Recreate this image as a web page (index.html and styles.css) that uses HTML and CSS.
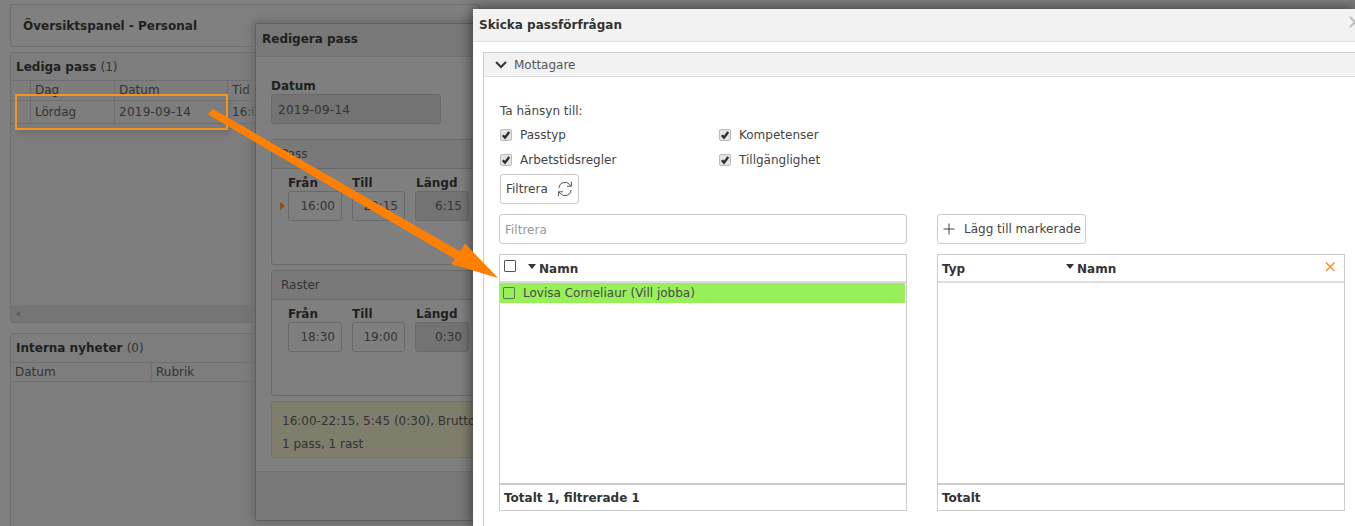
FILE: index.html
```html
<!DOCTYPE html>
<html lang="sv">
<head>
<meta charset="utf-8">
<title>Skicka passförfrågan</title>
<link rel="stylesheet" href="styles.css">
</head>
<body>
<main class="page">
  <header class="page-title">Översiktspanel - Personal</header>
  <section class="panel panel-free">
    <h2 class="panel-title">Lediga pass <span class="count">(1)</span></h2>
    <div class="grid-head"><span class="c0"></span><span class="c1">Dag</span><span class="c2">Datum</span><span class="c3">Tid</span></div>
    <div class="grid-row"><span class="c0"></span><span class="c1">Lördag</span><span class="c2 digits">2019-09-14</span><span class="c3">16:00</span></div>
    <div class="grid-fill"></div>
    <div class="hscroll"><span class="hscroll-arrow"></span></div>
  </section>
  <section class="panel panel-news">
    <h2 class="panel-title">Interna nyheter <span class="count">(0)</span></h2>
    <div class="grid-head news-head"><span class="n1">Datum</span><span class="n2">Rubrik</span></div>
  </section>
</main>

<section class="modal-edit">
  <h2 class="edit-title">Redigera pass</h2>
  <div class="edit-body">
    <label class="edit-label">Datum</label>
    <div class="edit-input date-input digits">2019-09-14</div>
    <div class="edit-box box-pass">
      <div class="edit-box-head">Pass</div>
      <div class="time-labels"><b>Från</b><b>Till</b><b>Längd</b></div>
      <div class="time-row">
        <span class="marker"></span>
        <span class="time t1">16:00</span><span class="time t2">22:15</span><span class="time t3 ro">6:15</span>
      </div>
    </div>
    <div class="edit-box box-rast">
      <div class="edit-box-head">Raster</div>
      <div class="time-labels"><b>Från</b><b>Till</b><b>Längd</b></div>
      <div class="time-row">
        <span class="marker hidden"></span>
        <span class="time t1">18:30</span><span class="time t2">19:00</span><span class="time t3 ro">0:30</span>
      </div>
    </div>
    <div class="summary">
      <div>16:00-22:15, 5:45 (0:30), Brutto</div>
      <div>1 pass, 1 rast</div>
    </div>
  </div>
  <div class="edit-foot"></div>
</section>

<section class="modal-send">
  <header class="send-head">
    <h1 class="send-title">Skicka passförfrågan</h1>
    <svg class="close" viewBox="0 0 12 12" width="12" height="12"><path d="M1 1l10 10M11 1L1 11"/></svg>
  </header>
  <div class="send-body">
    <div class="accordion">
      <div class="acc-head">
        <svg class="chev" viewBox="0 0 12 8" width="12" height="8"><path d="M1 1l5 5 5-5"/></svg>
        <span>Mottagare</span>
      </div>
      <div class="acc-body">
        <div class="consider">Ta hänsyn till:</div>
        <div class="checks">
          <label class="check"><span class="cb on"><svg viewBox="0 0 12 12" width="12" height="12"><path d="M2.800 6.200l2.200 2.400L9.200 3"/></svg></span>Passtyp</label>
          <label class="check"><span class="cb on"><svg viewBox="0 0 12 12" width="12" height="12"><path d="M2.800 6.200l2.200 2.400L9.200 3"/></svg></span>Kompetenser</label>
          <label class="check"><span class="cb on"><svg viewBox="0 0 12 12" width="12" height="12"><path d="M2.800 6.200l2.200 2.400L9.200 3"/></svg></span>Arbetstidsregler</label>
          <label class="check"><span class="cb on"><svg viewBox="0 0 12 12" width="12" height="12"><path d="M2.800 6.200l2.200 2.400L9.200 3"/></svg></span>Tillgänglighet</label>
        </div>
        <button class="btn btn-filter">Filtrera
          <svg class="refresh" viewBox="0 0 16 16" width="16" height="16"><path d="M1.800 7A6.200 6.200 0 0 1 12.600 3.400L14.200 5.200M14.400 .8v4.400h-4.400M14.200 9A6.200 6.200 0 0 1 3.400 12.600L1.800 10.800M1.600 15.200v-4.400h4.400"/></svg>
        </button>
        <div class="columns">
          <div class="column">
            <div class="search">Filtrera</div>
            <div class="list">
              <div class="list-head">
                <span class="box head-box"></span>
                <span class="sort"></span><b class="head-label">Namn</b>
              </div>
              <div class="list-body">
                <div class="list-row"><span class="box row-box"></span>Lovisa Corneliaur (Vill jobba)</div>
              </div>
              <div class="list-foot">Totalt 1, filtrerade 1</div>
            </div>
          </div>
          <div class="column">
            <div class="toolbar">
              <button class="btn btn-add">
                <svg class="plus" viewBox="0 0 12 12" width="12" height="12"><path d="M6 .5v11M.5 6h11"/></svg>
                Lägg till markerade
              </button>
            </div>
            <div class="list">
              <div class="list-head">
                <b class="typ head-label">Typ</b>
                <span class="sort"></span><b class="head-label">Namn</b>
                <svg class="clear" viewBox="0 0 10 10" width="10" height="10"><path d="M1 .5l8.500 8.500M9.500 .5L1 9"/></svg>
              </div>
              <div class="list-body"></div>
              <div class="list-foot">Totalt</div>
            </div>
          </div>
        </div>
      </div>
    </div>
  </div>
</section>

<div class="highlight"></div>
<svg class="arrow" viewBox="0 0 1355 526" width="1355" height="526">
  <path d="M208 114.500L213 109L460 251.500L465 243.500L498 278L451 264L455 259Z"/>
</svg>
</body>
</html>
```
FILE: styles.css
```css
* { box-sizing: border-box; }
html, body { margin: 0; height: 100%; }
body {
  position: relative;
  width: 1355px;
  height: 526px;
  overflow: hidden;
  background: #808080;
  font-family: "DejaVu Sans", sans-serif;
  font-size: 12px;
  color: #2f2f2f;
}
h1, h2 { margin: 0; font-size: 12px; }
.digits { letter-spacing: .25px; }

/* Dimmed page */
.page { display: flex; flex-direction: column; padding: 4px 0 0 10px; width: 480px; height: 526px; }
.page-title {
  height: 43px;
  border: 1px solid #6e6e6e;
  border-radius: 3px;
  padding: 14px 0 0 12px;
  font-weight: 700;
  color: #1f1f1f;
}
.panel { border: 1px solid #6e6e6e; border-radius: 3px; background: #7d7d7d; display: flex; flex-direction: column; }
.panel-free { margin-top: 5px; height: 271px; }
.panel-news { margin-top: 10px; flex: 1; border-bottom: 0; border-radius: 3px 3px 0 0; }
.panel-title { height: 27px; padding: 7px 0 0 5px; color: #1f1f1f; font-weight: 700; background: #7d7d7d; }
.panel-news .panel-title { height: 28px; }
.count { font-weight: 400; color: #333; }
.grid-head, .grid-row { display: flex; height: 20px; border-top: 1px solid #6f6f6f; color: #333; }
.grid-head span { padding-left: 4px; border-right: 1px solid #6f6f6f; line-height: 19px; flex: none; }
.grid-row span { padding-left: 4px; border-right: 1px solid #6f6f6f; line-height: 22px; flex: none; }
.grid-row { height: 24px; border-bottom: 1px solid #6f6f6f; }
.c0 { width: 20px; }
.c1 { width: 84px; }
.c2 { width: 113px; }
.c3 { width: 60px; }
.grid-fill { flex: 1; }
.hscroll { height: 17px; background: #757575; display: flex; align-items: center; padding-left: 5px; }
.hscroll-arrow { width: 0; height: 0; border: 3px solid transparent; border-right: 4px solid #5c5c5c; border-left: 0; }
.news-head { height: 20px; border-bottom: 1px solid #6f6f6f; }
.n1 { width: 141px; }
.n2 { width: 120px; }

/* Edit dialog */
.modal-edit {
  position: absolute;
  left: 255px;
  top: 23px;
  width: 460px;
  height: 498px;
  background: #7f7f7f;
  border: 1px solid #5e5e5e;
  border-radius: 3px;
  box-shadow: 0 0 10px 3px #6c6c6c;
  display: flex;
  flex-direction: column;
}
.edit-title { height: 33px; padding: 8px 0 0 6px; color: #1f1f1f; background: #787878; border-bottom: 1px solid #707070; }
.edit-body { flex: 1; padding: 21px 0 0 15px; }
.edit-label { display: block; font-weight: 700; color: #1f1f1f; line-height: 16px; }
.edit-input {
  width: 170px; height: 30px; padding: 8px 0 0 6px;
  background: #737373; border: 1px solid #696969; border-radius: 3px; color: #333;
}
.edit-box { width: 300px; margin-top: 15px; border: 1px solid #696969; border-radius: 3px; }
.box-pass { height: 126px; }
.box-rast { height: 126px; margin-top: 5px; }
.edit-box-head { height: 29px; padding: 7px 0 0 9px; background: #797979; border-bottom: 1px solid #696969; color: #333; }
.time-labels { display: flex; padding-top: 6px; line-height: 16px; color: #1f1f1f; }
.time-labels b:nth-child(1) { margin-left: 16px; width: 64px; }
.time-labels b:nth-child(2) { width: 64px; }
.time-row { display: flex; align-items: center; height: 30px; color: #333; }
.marker { width: 0; height: 0; margin-left: 8px; margin-right: 3px; border: 4.5px solid transparent; border-left: 5px solid #8f4f12; border-right: 0; }
.marker.hidden { visibility: hidden; }
.time { height: 30px; line-height: 28px; text-align: right; padding-right: 6px; border: 1px solid #696969; border-radius: 3px; }
.t1 { width: 54px; margin-right: 10px; }
.t2 { width: 53px; margin-right: 10px; padding-right: 6px; }
.t3 { width: 54px; }
.ro { background: #737373; }
.summary {
  width: 300px; height: 57px; margin-top: 5px; padding: 8px 0 0 10px;
  background: #7f7d6b; border: 1px solid #77745a; border-radius: 3px; color: #333; line-height: 23px;
}
.summary div { white-space: nowrap; }
.edit-foot { height: 49px; background: #787878; border-top: 1px solid #707070; }

/* Send dialog */
.modal-send {
  position: absolute;
  left: 473px;
  top: 9px;
  width: 882px;
  height: 517px;
  background: #fff;
  border-radius: 3px 0 0 0;
  box-shadow: 0 0 13px 1px rgba(0, 0, 0, .55);
  display: flex;
  flex-direction: column;
}
.send-head {
  height: 33px; flex: none; display: flex; align-items: center; justify-content: space-between;
  padding: 0 0 0 6px; background: #f2f2f2; border-bottom: 1px solid #e2e2e2;
}
.send-title { color: #333; font-weight: 700; }
.close { fill: none; stroke: #bdbdbd; stroke-width: 2; margin: -6px -6px 0 0; }
.send-body { padding: 10px 0 0 10px; flex: 1; }
.accordion { border: 1px solid #ccc; border-bottom: 0; border-right: 0; height: 100%; }
.acc-head {
  height: 24px; display: flex; align-items: center; gap: 7px; padding-left: 11px;
  background: #f2f2f2; border-bottom: 1px solid #dedede; color: #555;
}
.chev { fill: none; stroke: #333; stroke-width: 2; }
.acc-body { padding: 24px 0 0 16px; }
.consider { line-height: 20px; color: #444; }
.checks { display: grid; grid-template-columns: 219px 200px; grid-auto-rows: 25px; margin-top: 1px; }
.check { display: flex; align-items: center; gap: 8px; color: #444; }
.cb {
  width: 12px; height: 12px; border: 1px solid #bbb; border-radius: 2px; background: #e4e4e4;
  display: flex; align-items: center; justify-content: center; flex: none;
}
.cb svg { fill: none; stroke: #2f2f2f; stroke-width: 2.4; flex: none; }
.btn {
  display: flex; align-items: center; font: inherit; color: #444; background: #fff;
  border: 1px solid #ccc; border-radius: 3px; padding: 0;
}
.btn-filter { width: 79px; height: 30px; padding-left: 5px; gap: 9px; margin-top: 2px; }
.refresh { fill: none; stroke: #555; stroke-width: 1; flex: none; }
.columns { display: flex; gap: 30px; margin: 10px 0 0 -1px; }
.column { width: 408px; display: flex; flex-direction: column; }
.search { height: 30px; border: 1px solid #ccc; border-radius: 3px; padding: 8px 0 0 5px; color: #999; }
.toolbar { height: 30px; display: flex; }
.btn-add { width: 149px; height: 30px; padding-left: 5px; gap: 9px; }
.plus { fill: none; stroke: #444; stroke-width: 1; flex: none; }
.list { margin-top: 10px; height: 257px; border: 1px solid #ccc; display: flex; flex-direction: column; }
.list-head {
  position: relative; height: 28px; flex: none; display: flex; align-items: center; padding: 0 4px;
  border-bottom: 2px solid #dcdcdc; color: #333;
}
.head-label { padding-top: 2px; }
.box { display: block; border: 1px solid #555; border-radius: 1px; flex: none; }
.head-box { width: 12px; height: 12px; margin-right: 12px; margin-top: -4px; }
.sort { width: 0; height: 0; margin-right: 3px; margin-top: -4px; border: 4px solid transparent; border-top: 5px solid #333; border-bottom: 0; }
.typ { width: 124px; }
.clear { position: absolute; right: 9px; top: 7px; fill: none; stroke: #f5872a; stroke-width: 1.3; }
.list-body { flex: 1; }
.list-row {
  height: 20px; margin-right: 1px; background: #97ef5a; display: flex; align-items: center; gap: 8px; padding-left: 3px; color: #4a4a4a;
}
.row-box { width: 12px; height: 12px; border-color: #5a7a45; }
.list-foot { height: 27px; flex: none; border-top: 2px solid #ccc; padding: 6px 0 0 4px; font-weight: 700; color: #333; }

/* Annotation */
.highlight {
  position: absolute; left: 15px; top: 94px; width: 213px; height: 36px;
  border: 2px solid #f7931e; box-shadow: 2px 4px 6px rgba(0, 0, 0, .12);
}
.arrow { position: absolute; left: 0; top: 0; fill: #ff8000; pointer-events: none; }
```
